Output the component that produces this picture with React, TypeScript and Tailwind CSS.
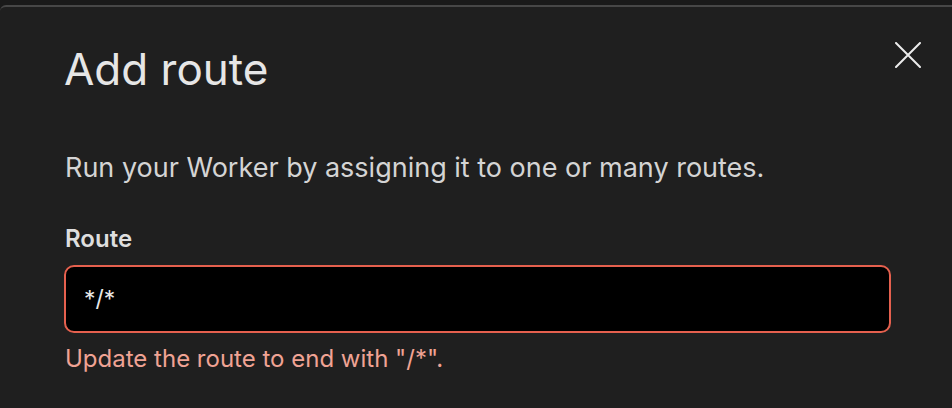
import React from 'react';

const FONT = { fontFamily: 'Inter, "Noto Sans", sans-serif' };

const CloseIcon: React.FC = () => (
  <svg width="26" height="26" viewBox="0 0 26 26" fill="none">
    <path d="M1 1L25 25M25 1L1 25" stroke="#ececec" strokeWidth="2" strokeLinecap="round" />
  </svg>
);

export default function App() {
  return (
    <div className="w-[952px] h-[408px] bg-[#1a1a1a] overflow-hidden" style={FONT}>
      <div className="h-[5px]" />
      <div className="h-[403px] bg-[#1f1f1f] border-t-2 border-[#474747] rounded-tl-[6px]">
        <div className="flex items-start justify-between pl-[64px] pr-[31px]">
          <h2 className="mt-[32px] text-[44px] leading-[60px] font-normal text-[#e6e6e6]">
            Add route
          </h2>
          <button className="mt-[35px] p-0">
            <CloseIcon />
          </button>
        </div>
        <div className="pl-[65px]">
          <p className="mt-[51px] text-[27px] leading-[36px] text-[#d4d4d4]">
            Run your Worker by assigning it to one or many routes.
          </p>
          <label className="block mt-[38px] text-[24px] leading-[30px] font-semibold text-[#dedede]">
            Route
          </label>
          <div className="mt-[11px] w-[827px] h-[68px] -ml-[1px] rounded-[10px] border-2 border-[#e5604e] bg-black flex items-center px-[18px]">
            <span className="text-[23px] text-[#e8e8e8]">*/*</span>
          </div>
          <p className="mt-[10px] text-[24px] leading-[32px] text-[#f0a394]">
            Update the route to end with "/*".
          </p>
        </div>
      </div>
    </div>
  );
}
